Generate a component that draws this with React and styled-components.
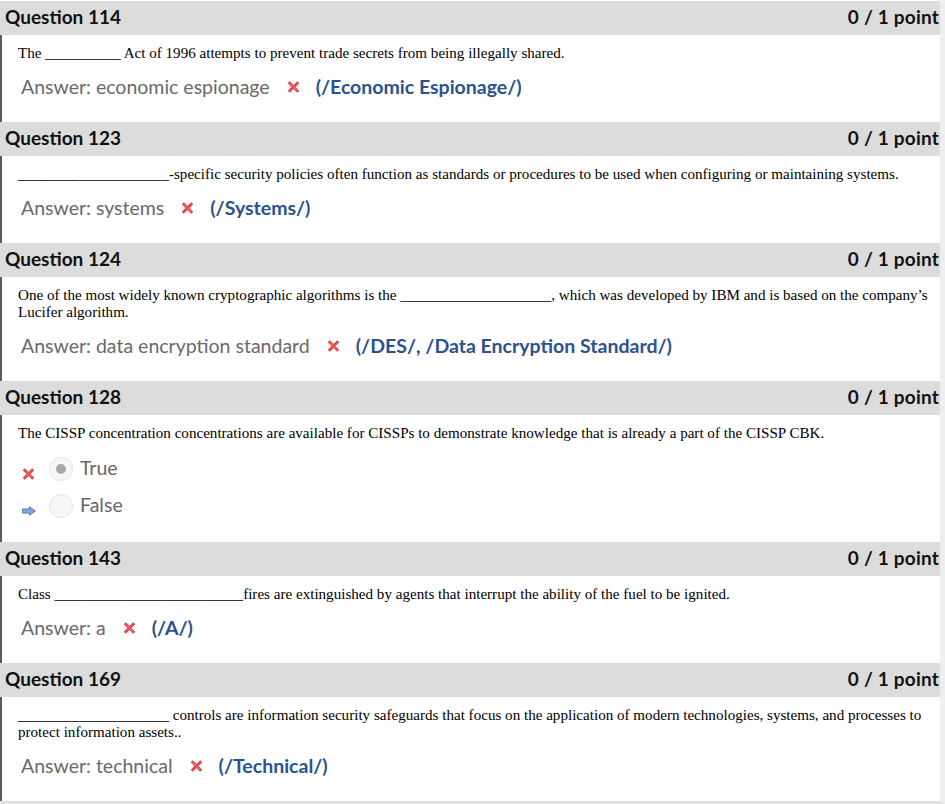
import React from 'react';
import styled, { createGlobalStyle } from 'styled-components';

const GlobalStyle = createGlobalStyle`
  body {
    margin: 0;
    background: #fff;
  }
`;

const Page = styled.div`
  width: 940px;
  padding-top: 1px;
  border-right: 5px solid #eeeeee;
  border-bottom: 3px solid #e2e2e2;
`;

const Block = styled.section``;

const Header = styled.div`
  height: 34px;
  box-sizing: border-box;
  background: #dcdcdc;
  display: flex;
  align-items: center;
  justify-content: space-between;
  padding: 0 1px 4px 5px;
  font-family: Lato, "Liberation Sans", sans-serif;
  font-size: 19px;
  font-weight: 700;
  color: #111;
`;

const Points = styled.span`
  letter-spacing: 0.2px;
`;

const Body = styled.div`
  border-left: 2px solid #5c5c5c;
  padding: 10px 6px ${(p) => p.$bottom}px 16px;
`;

const QuestionText = styled.div`
  font-family: "Liberation Serif", "Times New Roman", serif;
  font-size: 15.1px;
  line-height: 17px;
  color: #000;
`;

const AnswerRow = styled.div`
  margin-top: 11px;
  padding-left: 3px;
  height: 26px;
  display: flex;
  align-items: center;
  font-family: Lato, "Liberation Sans", sans-serif;
  font-size: 19.5px;
`;

const Given = styled.span`
  color: #6a6a6a;
`;

const Correct = styled.span`
  color: #2b5191;
  font-weight: 700;
`;

const MarkBox = styled.span`
  display: inline-flex;
  margin: 2px 16px 0 17px;
`;

const Options = styled.div`
  margin-top: 8px;
`;

const Option = styled.div`
  height: 37px;
  display: flex;
  align-items: center;
  font-family: Lato, "Liberation Sans", sans-serif;
  font-size: 19.5px;
  color: #666;
`;

const OptionMark = styled.span`
  width: 27px;
  padding-left: 4px;
  box-sizing: border-box;
  display: inline-flex;
  margin-top: 11px;
`;

const Radio = styled.span`
  width: 24px;
  height: 24px;
  box-sizing: border-box;
  border-radius: 50%;
  border: 1px solid #e4e4e4;
  background: #f7f7f7;
  margin-left: 4px;
  margin-right: 7px;
  display: inline-flex;
  align-items: center;
  justify-content: center;
  &::after {
    content: '';
    width: 10px;
    height: 10px;
    border-radius: 50%;
    background: ${(p) => (p.$checked ? '#a9a9a9' : 'transparent')};
  }
`;

const OptionLabel = styled.span`
  margin-top: -3px;
`;

const Cross = () => (
  <svg width="13" height="12" viewBox="0 0 13 12">
    <path d="M2.8 2.3 L10.2 9.7 M10.2 2.3 L2.8 9.7" stroke="#e5484f" strokeWidth="3" strokeLinecap="square" />
    <path d="M3.2 2.7 L9.8 9.3" stroke="#f58a8e" strokeWidth="0.8" />
  </svg>
);

const Arrow = () => (
  <svg width="14" height="10" viewBox="0 0 14 10">
    <path d="M0.5 3 H7.5 V0.8 L13.3 5 L7.5 9.2 V7 H0.5 Z" fill="#83a5da" stroke="#5476ae" strokeWidth="1" />
  </svg>
);

const fill = (n) => '_'.repeat(n);

const questions = [
  {
    num: 114,
    text: `The ${fill(10)} Act of 1996 attempts to prevent trade secrets from being illegally shared.`,
    given: 'economic espionage',
    correct: '(/Economic Espionage/)',
  },
  {
    num: 123,
    text: `${fill(20)}-specific security policies often function as standards or procedures to be used when configuring or maintaining systems.`,
    given: 'systems',
    correct: '(/Systems/)',
  },
  {
    num: 124,
    text: `One of the most widely known cryptographic algorithms is the ${fill(20)}, which was developed by IBM and is based on the company’s Lucifer algorithm.`,
    given: 'data encryption standard',
    correct: '(/DES/, /Data Encryption Standard/)',
  },
  {
    num: 128,
    text: 'The CISSP concentration concentrations are available for CISSPs to demonstrate knowledge that is already a part of the CISSP CBK.',
    options: [
      { label: 'True', checked: true, mark: 'cross' },
      { label: 'False', checked: false, mark: 'arrow' },
    ],
  },
  {
    num: 143,
    text: `Class ${fill(25)}fires are extinguished by agents that interrupt the ability of the fuel to be ignited.`,
    given: 'a',
    correct: '(/A/)',
  },
  {
    num: 169,
    text: `${fill(20)} controls are information security safeguards that focus on the application of modern technologies, systems, and processes to protect information assets..`,
    given: 'technical',
    correct: '(/Technical/)',
  },
];

const App = () => (
  <>
    <GlobalStyle />
    <Page>
      {questions.map((q) => (
        <Block key={q.num}>
          <Header>
            <span>{`Question ${q.num}`}</span>
            <Points>0 / 1 point</Points>
          </Header>
          <Body $bottom={q.options ? 18 : 23}>
            <QuestionText>{q.text}</QuestionText>
            {q.options ? (
              <Options>
                {q.options.map((o) => (
                  <Option key={o.label}>
                    <OptionMark>{o.mark === 'cross' ? <Cross /> : <Arrow />}</OptionMark>
                    <Radio $checked={o.checked} />
                    <OptionLabel>{o.label}</OptionLabel>
                  </Option>
                ))}
              </Options>
            ) : (
              <AnswerRow>
                <Given>{`Answer: ${q.given}`}</Given>
                <MarkBox>
                  <Cross />
                </MarkBox>
                <Correct>{q.correct}</Correct>
              </AnswerRow>
            )}
          </Body>
        </Block>
      ))}
    </Page>
  </>
);

export default App;
